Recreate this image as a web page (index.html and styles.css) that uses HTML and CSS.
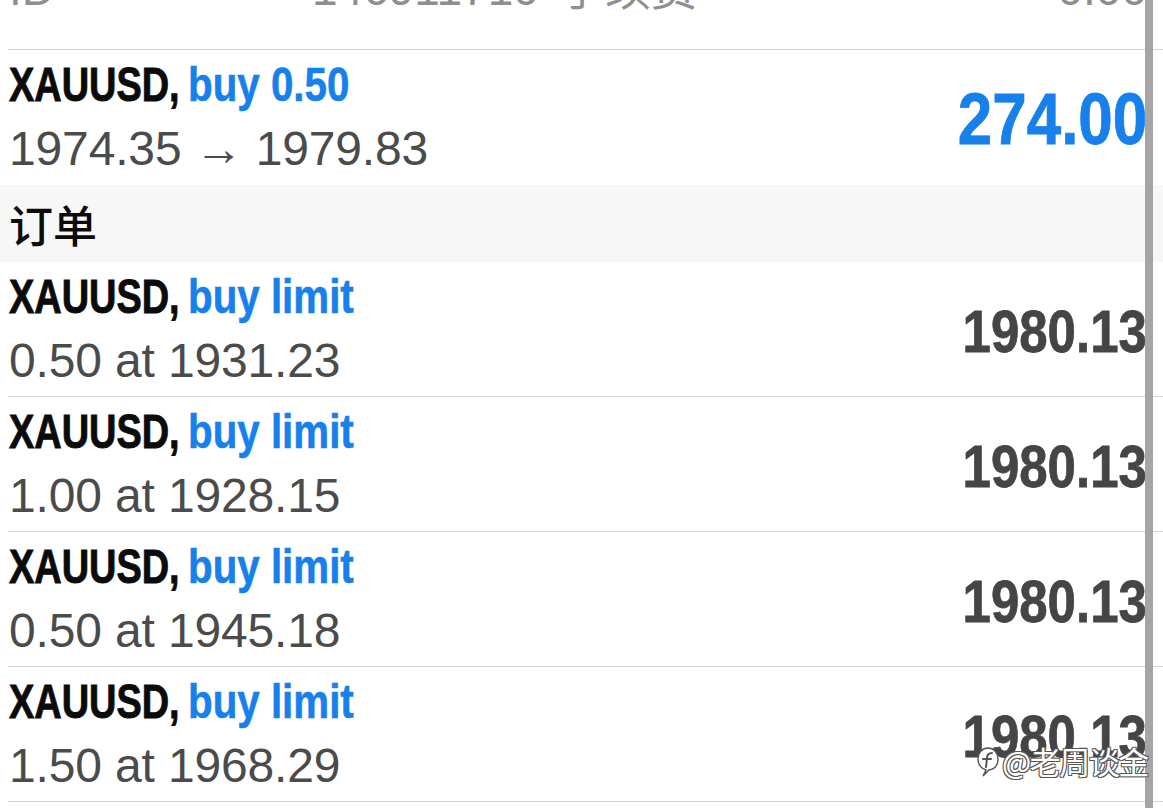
FILE: index.html
```html
<!DOCTYPE html>
<html lang="zh-CN">
<head>
    <meta charset="UTF-8">
    <meta name="viewport" content="width=device-width, initial-scale=1.0">
    <title>交易</title>
    <link rel="stylesheet" href="styles.css">
</head>
<body>
    <!-- Trade list -->
    <div class="screen">
        <div class="row peek">
            <span>ID</span>
            <span>146911710</span>
            <span>手续费</span>
            <span class="peek-value">0.00</span>
        </div>

        <div class="row trade">
            <div class="info">
                <div class="title"><span class="sym">XAUUSD,</span><span class="side">buy 0.50</span></div>
                <div class="detail">1974.35 → 1979.83</div>
            </div>
            <div class="value profit">274.00</div>
        </div>

        <div class="section">订单</div>

        <div class="row order">
            <div class="info">
                <div class="title"><span class="sym">XAUUSD,</span><span class="side">buy limit</span></div>
                <div class="detail">0.50 at 1931.23</div>
            </div>
            <div class="value">1980.13</div>
        </div>
        <div class="row order">
            <div class="info">
                <div class="title"><span class="sym">XAUUSD,</span><span class="side">buy limit</span></div>
                <div class="detail">1.00 at 1928.15</div>
            </div>
            <div class="value">1980.13</div>
        </div>
        <div class="row order">
            <div class="info">
                <div class="title"><span class="sym">XAUUSD,</span><span class="side">buy limit</span></div>
                <div class="detail">0.50 at 1945.18</div>
            </div>
            <div class="value">1980.13</div>
        </div>
        <div class="row order">
            <div class="info">
                <div class="title"><span class="sym">XAUUSD,</span><span class="side">buy limit</span></div>
                <div class="detail">1.50 at 1968.29</div>
            </div>
            <div class="value">1980.13</div>
        </div>
    </div>

    <!-- Scroll indicator -->
    <div class="scrollbar"></div>

    <!-- Watermark -->
    <div class="watermark">
        <svg class="wm-logo" width="24" height="32" viewBox="0 0 24 32">
            <path d="M12 3 C6 3 2 8 2 14 C2 20 6 24 10 25 L7 31 L13 25 C19 24 22 20 22 14 C22 8 18 3 12 3 Z" fill="#fff" stroke="#555" stroke-width="1.4"/>
            <path d="M16 8 C12 8 11 10 11 13 L10 22 M7 14 L15 14" fill="none" stroke="#555" stroke-width="2" stroke-linecap="round"/>
        </svg>
        <span>@老周谈金</span>
    </div>
</body>
</html>
```

FILE: styles.css
```css
/* Page */
body {
    margin: 0;
    background-color: #fff;
    font-family: "Liberation Sans", Arial, "Noto Sans CJK SC", sans-serif;
    overflow: hidden;
    position: relative;
    height: 808px;
}

.screen {
    width: 100%;
}

/* Rows */
.row {
    margin-left: 8px;
    padding: 3px 16px 0 1px;
    box-sizing: border-box;
    display: flex;
    justify-content: space-between;
    align-items: flex-start;
    border-bottom: 1px solid #d3d3d3;
}

/* Row cut off at the top */
.peek {
    height: 50px;
    padding-top: 0;
    display: grid;
    grid-template-columns: 303px 247px 1fr auto;
    overflow: hidden;
    font-size: 46px;
    line-height: 46px;
    color: #8e8e8e;
}

.peek span {
    margin-top: -34px;
    white-space: nowrap;
}

.trade {
    height: 135px;
    border-bottom: none;
}

.order {
    height: 135px;
}

.title {
    display: flex;
    white-space: nowrap;
    font-size: 48px;
    line-height: 64px;
    font-weight: bold;
    -webkit-text-stroke: 0.9px currentColor;
}

.sym {
    color: #0b0b0b;
    display: inline-block;
    transform: scaleX(0.79);
    transform-origin: left center;
    margin-right: -46px;
}

.side {
    color: #1780ea;
    display: inline-block;
    transform: scaleX(0.84);
    transform-origin: left center;
    margin-left: 9px;
    -webkit-text-stroke: 0.6px currentColor;
}

.detail {
    font-size: 48px;
    line-height: 64px;
    letter-spacing: -0.15px;
    color: #4b4b4b;
    white-space: nowrap;
}

.value {
    align-self: center;
    font-size: 60px;
    line-height: 1;
    font-weight: bold;
    color: #454547;
    transform: scaleX(0.85);
    transform-origin: right center;
    margin-top: 2px;
    -webkit-text-stroke: 0.8px currentColor;
}

.value.profit {
    font-size: 72px;
    color: #1780ea;
    transform: scaleX(0.86);
    margin-top: 0;
}

/* Section header */
.section {
    height: 77px;
    background-color: #f7f7f7;
    display: flex;
    align-items: center;
    padding-left: 9px;
    font-family: "Noto Sans CJK SC", sans-serif;
    font-size: 44px;
    font-weight: 500;
    color: #0b0b0b;
}

/* Scroll indicator */
.scrollbar {
    position: absolute;
    top: 0;
    left: 1145px;
    width: 8px;
    height: 100%;
    background-color: #a5a5a5;
}

/* Watermark */
.watermark {
    position: absolute;
    left: 976px;
    top: 738px;
    display: flex;
    align-items: center;
    gap: 2px;
    font-family: "Noto Sans CJK SC", sans-serif;
    font-size: 31px;
    letter-spacing: -1.5px;
    color: #fff;
    text-shadow: -1px -1px 0 #555, 1px -1px 0 #555, -1px 1px 0 #555, 1px 1px 0 #555;
}
```
